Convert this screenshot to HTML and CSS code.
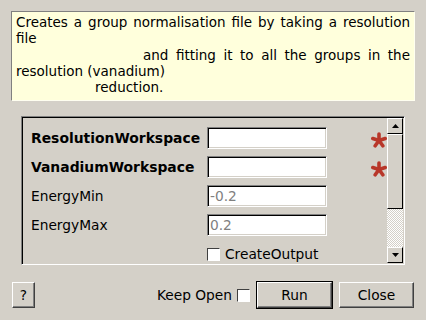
FILE: index.html
```html
<!DOCTYPE html>
<html lang="en">
<head>
    <meta charset="UTF-8">
    <title>CreateGroupingByComponent</title>
    <link rel="stylesheet" href="styles.css">
</head>
<body>
    <div class="desc">
        <div class="line just">Creates a group normalisation file by taking a resolution</div>
        <div class="line">file</div>
        <div class="line just indent-wide">and fitting it to all the groups in the</div>
        <div class="line">resolution (vanadium)</div>
        <div class="line indent-short">reduction.</div>
    </div>

    <div class="panel">
        <div class="props">
            <label class="name bold">ResolutionWorkspace</label>
            <input class="field" type="text">
            <span class="star"><svg width="16" height="16" viewBox="0 0 16 16"><g stroke="#b8372a" stroke-width="3.6" stroke-linecap="round"><line x1="8" y1="8.5" x2="8" y2="2"/><line x1="8" y1="8.5" x2="14.2" y2="6.5"/><line x1="8" y1="8.5" x2="11.8" y2="13.8"/><line x1="8" y1="8.5" x2="4.2" y2="13.8"/><line x1="8" y1="8.5" x2="1.8" y2="6.5"/></g></svg></span>

            <label class="name bold">VanadiumWorkspace</label>
            <input class="field" type="text">
            <span class="star"><svg width="16" height="16" viewBox="0 0 16 16"><g stroke="#b8372a" stroke-width="3.6" stroke-linecap="round"><line x1="8" y1="8.5" x2="8" y2="2"/><line x1="8" y1="8.5" x2="14.2" y2="6.5"/><line x1="8" y1="8.5" x2="11.8" y2="13.8"/><line x1="8" y1="8.5" x2="4.2" y2="13.8"/><line x1="8" y1="8.5" x2="1.8" y2="6.5"/></g></svg></span>

            <label class="name">EnergyMin</label>
            <input class="field" type="text" placeholder="-0.2">
            <span></span>

            <label class="name">EnergyMax</label>
            <input class="field" type="text" placeholder="0.2">
            <span></span>

            <span></span>
            <div class="check-row"><span class="box"></span>CreateOutput</div>
            <span></span>
        </div>
        <div class="scrollbar">
            <div class="arrow up"><svg width="7" height="4" viewBox="0 0 7 4"><path d="M3.5 0 L7 4 L0 4 Z" fill="#000"/></svg></div>
            <div class="handle"></div>
            <div class="trough"></div>
            <div class="arrow down"><svg width="7" height="4" viewBox="0 0 7 4"><path d="M0 0 L7 0 L3.5 4 Z" fill="#000"/></svg></div>
        </div>
    </div>

    <div class="buttons">
        <button class="btn help">?</button>
        <span class="spacer"></span>
        <span class="keep">Keep Open</span>
        <span class="box"></span>
        <div class="default-frame"><button class="btn wide">Run</button></div>
        <button class="btn wide">Close</button>
    </div>
</body>
</html>
```

FILE: styles.css
```css
body {
    margin: 0;
    width: 426px;
    height: 320px;
    background-color: #d4d0c8;
    font-family: "DejaVu Sans", sans-serif;
    font-size: 13.75px;
    color: #000;
    overflow: hidden;
}
.desc {
    margin: 11px 11px 0 11px;
    height: 86px;
    padding: 2px 4px 0 4px;
    background-color: #ffffdc;
    border-top: 1px solid #808080;
    border-left: 1px solid #808080;
    border-right: 1px solid #fffff0;
    border-bottom: 1px solid #fffff0;
    box-sizing: content-box;
    width: 394px;
    font-size: 13.5px;
}
.line {
    line-height: 16.25px;
    white-space: nowrap;
}
.just {
    text-align: justify;
    text-align-last: justify;
}
.indent-wide {
    padding-left: 127px;
}
.indent-short {
    padding-left: 79px;
}
.panel {
    margin: 15px 0 0 21px;
    width: 380px;
    height: 145px;
    display: flex;
    border-top: 1px solid #808080;
    border-left: 1px solid #808080;
    border-right: 1px solid #fff;
    border-bottom: 1px solid #fff;
    box-shadow: inset 1px 1px 0 #000, inset -1px -1px 0 #d4d0c8;
    padding: 1px;
}
.props {
    flex: 1;
    display: grid;
    grid-template-columns: 176px 120px 1fr;
    grid-auto-rows: 22px;
    row-gap: 7px;
    padding: 9px 0 0 8px;
    align-items: center;
    overflow: hidden;
}
.name {
    white-space: nowrap;
}
.bold {
    font-weight: bold;
    font-size: 13.9px;
}
.field {
    width: 120px;
    height: 22px;
    box-sizing: border-box;
    margin: 0;
    padding: 0 2px;
    font-family: "DejaVu Sans", sans-serif;
    font-size: 13.75px;
    background-color: #fff;
    border-top: 1px solid #808080;
    border-left: 1px solid #808080;
    border-right: 1px solid #fff;
    border-bottom: 1px solid #fff;
    box-shadow: inset 1px 1px 0 #000, inset -1px -1px 0 #d4d0c8;
    outline: none;
}
.field::placeholder {
    color: #808080;
}
.star {
    justify-self: end;
    display: flex;
    padding-top: 4px;
}
.check-row {
    display: flex;
    align-items: center;
    gap: 5px;
    white-space: nowrap;
}
.box {
    width: 11px;
    height: 11px;
    background-color: #fff;
    border-top: 1px solid #404040;
    border-left: 1px solid #404040;
    border-right: 1px solid #fff;
    border-bottom: 1px solid #fff;
    flex: none;
}
.scrollbar {
    width: 16px;
    display: flex;
    flex-direction: column;
}
.arrow {
    height: 14px;
    display: flex;
    align-items: center;
    justify-content: center;
    background-color: #d4d0c8;
    border-top: 1px solid #fff;
    border-left: 1px solid #fff;
    border-right: 1px solid #000;
    border-bottom: 1px solid #000;
    box-sizing: content-box;
    width: 14px;
}
.handle {
    height: 73px;
    width: 14px;
    background-color: #d4d0c8;
    border-top: 1px solid #fff;
    border-left: 1px solid #fff;
    border-right: 1px solid #000;
    border-bottom: 1px solid #000;
}
.trough {
    flex: 1;
    background: repeating-conic-gradient(#fff 0 25%, #d4d0c8 0 50%) 0 0 / 2px 2px;
}
.buttons {
    display: flex;
    align-items: center;
    margin-top: 16px;
    padding: 0 12px;
    height: 28px;
}
.spacer {
    flex: 1;
}
.keep {
    margin-right: 5px;
}
.buttons .box {
    margin-right: 6px;
}
.btn {
    height: 26px;
    margin: 0;
    padding: 0;
    font-family: "DejaVu Sans", sans-serif;
    font-size: 13.75px;
    color: #000;
    background-color: #d4d0c8;
    border-top: 1px solid #fff;
    border-left: 1px solid #fff;
    border-right: 1px solid #404040;
    border-bottom: 1px solid #404040;
    box-shadow: inset -1px -1px 0 #808080;
}
.help {
    width: 23px;
}
.wide {
    width: 75px;
}
.default-frame {
    display: flex;
    border: 1px solid #000;
    margin-right: 6px;
}
```
